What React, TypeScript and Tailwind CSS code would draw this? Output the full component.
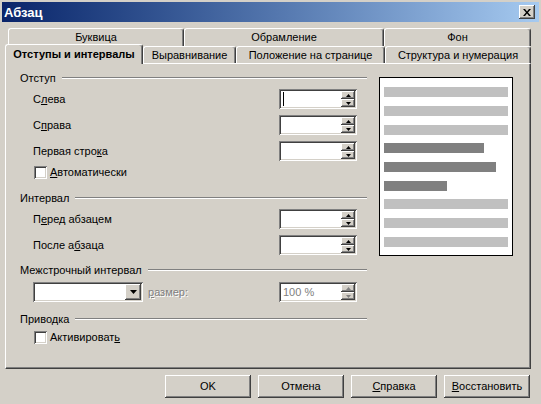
import React from 'react';

// classic 3D bevels
const raised =
  'shadow-[inset_-1px_-1px_#404040,inset_1px_1px_#ffffff,inset_-2px_-2px_#808080,inset_2px_2px_#d4d0c8]';
const sunken =
  'shadow-[inset_1px_1px_#808080,inset_-1px_-1px_#ffffff,inset_2px_2px_#404040,inset_-2px_-2px_#d4d0c8]';

const Arrow: React.FC<{ up?: boolean; color?: string }> = ({ up, color = '#000' }) => (
  <svg width="5" height="3" viewBox="0 0 5 3">
    <polygon points={up ? '2.5,0 5,3 0,3' : '0,0 5,0 2.5,3'} fill={color} />
  </svg>
);

const SpinBtn: React.FC<{ up?: boolean; disabled?: boolean }> = ({ up, disabled }) => (
  <div
    className={`flex h-[8px] items-center justify-center bg-[#d4d0c8] shadow-[inset_-1px_-1px_#404040,inset_1px_1px_#ffffff,inset_-2px_-2px_#808080]`}
  >
    <Arrow up={up} color={disabled ? '#808080' : '#000'} />
  </div>
);

const SpinField: React.FC<{ value?: string; cursor?: boolean; disabled?: boolean }> = ({
  value,
  cursor,
  disabled,
}) => (
  <div className={`flex h-[20px] w-[78px] bg-white p-[2px] ${sunken}`}>
    <div className={`flex flex-1 items-center pl-[2px] ${disabled ? 'text-[#808080]' : 'text-black'}`}>
      {cursor && <span className="h-[14px] w-px bg-black" />}
      {value}
    </div>
    <div className="flex w-[14px] flex-col">
      <SpinBtn up disabled={disabled} />
      <SpinBtn disabled={disabled} />
    </div>
  </div>
);

const Checkbox: React.FC<{ children: React.ReactNode }> = ({ children }) => (
  <div className="flex h-[13px] items-center gap-[3px] pl-[14px]">
    <div className={`h-[13px] w-[13px] bg-white ${sunken}`} />
    <span>{children}</span>
  </div>
);

const Section: React.FC<{ title: string; className?: string }> = ({ title, className = '' }) => (
  <div className={`flex h-[14px] items-center gap-[6px] ${className}`}>
    <span>{title}</span>
    <div className="h-[2px] flex-1 border-t border-b border-t-[#808080] border-b-white" />
  </div>
);

const Row: React.FC<{ label: React.ReactNode; cursor?: boolean }> = ({ label, cursor }) => (
  <div className="flex h-[20px] items-center pl-[13px] pr-[10px]">
    <span className="flex-1">{label}</span>
    <SpinField cursor={cursor} />
  </div>
);

const BackTab: React.FC<{ w: string; children: React.ReactNode }> = ({ w, children }) => (
  <div
    className={`flex h-full ${w} items-center justify-center rounded-t-[3px] border-t border-l border-r border-t-white border-l-white border-r-[#404040] shadow-[inset_-1px_0_#808080]`}
  >
    {children}
  </div>
);

const FrontTab: React.FC<{ w: string; children: React.ReactNode }> = ({ w, children }) => (
  <div
    className={`flex h-[17px] ${w} items-center justify-center rounded-t-[3px] border-t border-l border-r border-t-white border-l-white border-r-[#404040] shadow-[inset_-1px_0_#808080]`}
  >
    {children}
  </div>
);

const Button: React.FC<{ children: React.ReactNode }> = ({ children }) => (
  <div className={`flex h-[23px] w-[86px] items-center justify-center bg-[#d4d0c8] ${raised}`}>
    {children}
  </div>
);

const bars: { mt: string; w: string; dark?: boolean }[] = [
  { mt: 'mt-0', w: 'w-[124px]' },
  { mt: 'mt-[9px]', w: 'w-[124px]' },
  { mt: 'mt-[9px]', w: 'w-[124px]' },
  { mt: 'mt-[8px]', w: 'w-[100px]', dark: true },
  { mt: 'mt-[9px]', w: 'w-[112px]', dark: true },
  { mt: 'mt-[9px]', w: 'w-[63px]', dark: true },
  { mt: 'mt-[8px]', w: 'w-[124px]' },
  { mt: 'mt-[9px]', w: 'w-[124px]' },
  { mt: 'mt-[9px]', w: 'w-[124px]' },
];

export default function App() {
  return (
    <div className="h-[404px] w-[541px] overflow-hidden bg-[#d4d0c8] font-['Liberation_Sans',Arial,sans-serif] text-[11px] leading-none text-black">
      {/* title bar */}
      <div className="mx-[2px] mt-[2px] flex h-[20px] items-center justify-between bg-linear-to-r from-[#0a246a] to-[#a6caf0] pl-[2px] pr-[4px]">
        <span className="text-[13px] font-bold text-white">Абзац</span>
        <div className={`flex h-[14px] w-[16px] items-center justify-center bg-[#d4d0c8] ${raised}`}>
          <svg width="8" height="7" viewBox="0 0 8 7">
            <path d="M0 0h2l2 2.5 2-2.5h2L5 3.5 8 7H6L4 4.5 2 7H0l3-3.5z" fill="#000" />
          </svg>
        </div>
      </div>

      {/* tabs */}
      <div className="mt-[6px] flex h-[18px] pl-[8px]">
        <BackTab w="w-[176px]">Буквица</BackTab>
        <BackTab w="w-[200px]">Обрамление</BackTab>
        <BackTab w="w-[147px]">Фон</BackTab>
      </div>
      <div className="relative z-10 -mt-[2px] flex h-[19px] items-end pl-[5px]">
        <div className="relative top-[1px] flex h-[20px] w-[138px] items-center justify-center rounded-t-[3px] border-t border-l border-r border-t-white border-l-white border-r-[#404040] bg-[#d4d0c8] pb-[1px] font-bold shadow-[inset_-1px_0_#808080]">
          Отступы и интервалы
        </div>
        <FrontTab w="w-[93px]">Выравнивание</FrontTab>
        <FrontTab w="w-[149px]">Положение на странице</FrontTab>
        <FrontTab w="w-[146px]">Структура и нумерация</FrontTab>
      </div>

      {/* panel */}
      <div className="ml-[5px] flex h-[306px] w-[526px] border-t border-l border-r border-b border-t-white border-l-white border-r-[#404040] border-b-[#404040] pl-[14px] pt-[7px] shadow-[inset_-1px_-1px_#808080]">
        <div className="flex w-[347px] flex-col">
          <Section title="Отступ" />
          <div className="mt-[4px] flex flex-col gap-[6px]">
            <Row label={<>С<u>л</u>ева</>} cursor />
            <Row label={<>С<u>п</u>рава</>} />
            <Row label={<>Первая стро<u>к</u>а</>} />
          </div>
          <div className="mt-[5px]">
            <Checkbox>
              <u>А</u>втоматически
            </Checkbox>
          </div>

          <Section title="Интервал" className="mt-[12px]" />
          <div className="mt-[4px] flex flex-col gap-[6px]">
            <Row label={<>П<u>е</u>ред абзацем</>} />
            <Row label={<>После а<u>б</u>заца</>} />
          </div>

          <Section title="Межстрочный интервал" className="mt-[8px]" />
          <div className="mt-[5px] flex h-[20px] items-center pl-[13px] pr-[10px]">
            <div className={`flex h-[20px] w-[110px] items-center justify-end bg-white p-[2px] ${sunken}`}>
              <div className={`flex h-[16px] w-[16px] items-center justify-center bg-[#d4d0c8] ${raised}`}>
                <svg width="7" height="4" viewBox="0 0 7 4">
                  <polygon points="0,0 7,0 3.5,4" fill="#000" />
                </svg>
              </div>
            </div>
            <span className="ml-[5px] flex-1 text-[#808080] [text-shadow:1px_1px_#ffffff]">
              <u>р</u>азмер:
            </span>
            <SpinField value="100 %" disabled />
          </div>

          <Section title="Приводка" className="mt-[10px]" />
          <div className="mt-[5px]">
            <Checkbox>
              Активироват<u>ь</u>
            </Checkbox>
          </div>
        </div>

        {/* preview */}
        <div className="ml-[12px] mt-[6px] flex h-[179px] w-[134px] flex-col border border-black bg-white pl-[4px] pt-[9px]">
          {bars.map((b, i) => (
            <div
              key={i}
              className={`h-[10px] shrink-0 ${b.mt} ${b.w} ${b.dark ? 'bg-[#808080]' : 'bg-[#c0c0c0]'}`}
            />
          ))}
        </div>
      </div>

      {/* buttons */}
      <div className="mt-[6px] flex justify-end gap-[7px] pr-[11px]">
        <Button>OK</Button>
        <Button>Отмена</Button>
        <Button>
          <u>С</u>правка
        </Button>
        <Button>
          <u>В</u>осстановить
        </Button>
      </div>
    </div>
  );
}
